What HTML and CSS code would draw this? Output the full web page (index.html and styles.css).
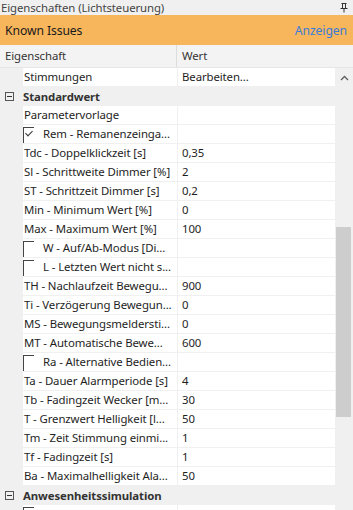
FILE: index.html
```html
<!DOCTYPE html>
<html>
<head>
  <meta charset="UTF-8">
  <title>Eigenschaften</title>
  <link rel="stylesheet" href="styles.css">
</head>
<body>
  <div class="titlebar">
    <span>Eigenschaften (Lichtsteuerung)</span>
    <svg class="pin" width="8" height="10" viewBox="0 0 8 10">
      <path d="M1.5 0.5h5M2.5 0.5v4.5M5.5 0.5v4.5M0.5 5.5h7M4 5.5v4" stroke="#333" stroke-width="1" fill="none"/>
    </svg>
  </div>

  <div class="issues">
    <span>Known Issues</span>
    <a class="link">Anzeigen</a>
  </div>

  <div class="head">
    <div class="head-name">Eigenschaft</div>
    <div class="head-value">Wert</div>
  </div>

  <div class="grid">
    <div class="rows">
      <div class="row"><div class="gutter"></div><div class="name">Stimmungen</div><div class="value">Bearbeiten...</div></div>

      <div class="category"><span class="toggle"></span>Standardwert</div>

      <div class="row"><div class="gutter"></div><div class="name">Parametervorlage</div><div class="value"></div></div>
      <div class="row"><div class="gutter"></div><div class="name"><span class="check checked"></span>Rem - Remanenzeinga...</div><div class="value"></div></div>
      <div class="row"><div class="gutter"></div><div class="name">Tdc - Doppelklickzeit [s]</div><div class="value">0,35</div></div>
      <div class="row"><div class="gutter"></div><div class="name">Sl - Schrittweite Dimmer [%]</div><div class="value">2</div></div>
      <div class="row"><div class="gutter"></div><div class="name">ST - Schrittzeit Dimmer [s]</div><div class="value">0,2</div></div>
      <div class="row"><div class="gutter"></div><div class="name">Min - Minimum Wert [%]</div><div class="value">0</div></div>
      <div class="row"><div class="gutter"></div><div class="name">Max - Maximum Wert [%]</div><div class="value">100</div></div>
      <div class="row"><div class="gutter"></div><div class="name"><span class="check"></span>W - Auf/Ab-Modus [Di...</div><div class="value"></div></div>
      <div class="row"><div class="gutter"></div><div class="name"><span class="check"></span>L - Letzten Wert nicht s...</div><div class="value"></div></div>
      <div class="row"><div class="gutter"></div><div class="name">TH - Nachlaufzeit Bewegu...</div><div class="value">900</div></div>
      <div class="row"><div class="gutter"></div><div class="name">Ti - Verzögerung Bewegun...</div><div class="value">0</div></div>
      <div class="row"><div class="gutter"></div><div class="name">MS - Bewegungsmeldersti...</div><div class="value">0</div></div>
      <div class="row"><div class="gutter"></div><div class="name">MT - Automatische Bewe...</div><div class="value">600</div></div>
      <div class="row"><div class="gutter"></div><div class="name"><span class="check"></span>Ra - Alternative Bedien...</div><div class="value"></div></div>
      <div class="row"><div class="gutter"></div><div class="name">Ta - Dauer Alarmperiode [s]</div><div class="value">4</div></div>
      <div class="row"><div class="gutter"></div><div class="name">Tb - Fadingzeit Wecker [m...</div><div class="value">30</div></div>
      <div class="row"><div class="gutter"></div><div class="name">T - Grenzwert Helligkeit [l...</div><div class="value">50</div></div>
      <div class="row"><div class="gutter"></div><div class="name">Tm - Zeit Stimmung einmi...</div><div class="value">1</div></div>
      <div class="row"><div class="gutter"></div><div class="name">Tf - Fadingzeit [s]</div><div class="value">1</div></div>
      <div class="row"><div class="gutter"></div><div class="name">Ba - Maximalhelligkeit Ala...</div><div class="value">50</div></div>

      <div class="category"><span class="toggle"></span>Anwesenheitssimulation</div>

      <div class="row"><div class="gutter"></div><div class="name"><span class="check"></span>As - Anwesenheitssimulation</div><div class="value"></div></div>
    </div>

    <div class="scrollbar">
      <svg class="arrow" width="9" height="6" viewBox="0 0 9 6">
        <path d="M1 5l3.5-3.5L8 5" stroke="#606060" stroke-width="1.4" fill="none"/>
      </svg>
      <div class="track">
        <div class="thumb"></div>
      </div>
    </div>
  </div>
</body>
</html>
```

FILE: styles.css
```css
body {
  margin: 0;
  width: 353px;
  height: 510px;
  overflow: hidden;
  background: #f0f0f0;
  font-family: "Noto Sans", "Open Sans", sans-serif;
  font-size: 11.4px;
  letter-spacing: -0.1px;
  color: #1e1e1e;
}

.titlebar {
  height: 15px;
  display: flex;
  align-items: center;
  justify-content: space-between;
  padding: 0 5px 0 1px;
  color: #444;
  line-height: 15px;
}
.pin {
  display: block;
}

.issues {
  height: 30px;
  background: #f7b55c;
  display: flex;
  align-items: center;
  justify-content: space-between;
  padding: 0 6px 0 5px;
  font-size: 12.2px;
  color: #1a1a1a;
}
.link {
  color: #3b7dd8;
}

.head {
  height: 22px;
  display: flex;
  background: #f3f3f3;
  color: #333;
  border-bottom: 1px solid #e6e6e6;
}
.head-name {
  width: 171px;
  padding-left: 5px;
  line-height: 22px;
  border-right: 1px solid #dcdcdc;
}
.head-value {
  padding-left: 5px;
  line-height: 22px;
}

.grid {
  display: flex;
}
.rows {
  width: 335px;
}
.row {
  display: grid;
  grid-template-columns: 22px 154px 158px;
  column-gap: 1px;
  height: 18px;
  border-bottom: 1px solid #f0f0f0;
  background: #f0f0f0;
}
.gutter {
  background: #f0f0f0;
}
.name, .value {
  background: #fff;
  line-height: 18px;
  white-space: nowrap;
  overflow: hidden;
}
.name {
  padding-left: 1px;
  display: flex;
  align-items: center;
}
.value {
  padding-left: 4px;
}

.check {
  flex: none;
  width: 10px;
  height: 16px;
  margin: 2px 9px 0 -1px;
  align-self: flex-start;
  border-top: 1px solid #444;
  border-left: 1px solid #444;
  position: relative;
}
.check.checked::after {
  content: "";
  position: absolute;
  left: 3px;
  top: 1px;
  width: 3px;
  height: 6px;
  border-right: 1px solid #333;
  border-bottom: 1px solid #333;
  transform: rotate(45deg);
}

.category {
  height: 19px;
  display: flex;
  align-items: center;
  font-weight: bold;
  color: #333;
  background: #f0f0f0;
}
.toggle {
  width: 9px;
  height: 9px;
  border: 1px solid #555;
  box-sizing: border-box;
  margin: 0 9px 0 5px;
  position: relative;
}
.toggle::after {
  content: "";
  position: absolute;
  left: 1px;
  right: 1px;
  top: 3px;
  height: 1px;
  background: #333;
}

.scrollbar {
  width: 18px;
  display: flex;
  flex-direction: column;
  align-items: center;
  background: #f0f0f0;
}
.arrow {
  margin-top: 7px;
}
.track {
  width: 100%;
  padding-top: 146px;
}
.thumb {
  margin: 0 2px 0 1px;
  height: 190px;
  background: #cdcdcd;
}
```
